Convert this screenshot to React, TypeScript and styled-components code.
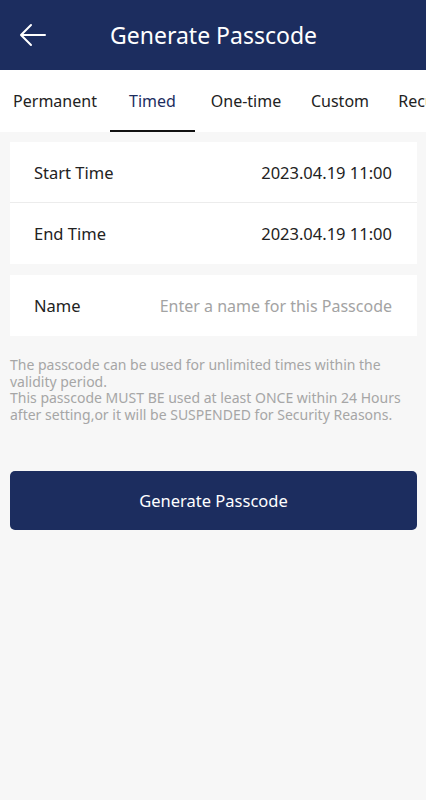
import React from "react";
import styled, { createGlobalStyle } from "styled-components";

const Global = createGlobalStyle`
  html, body { margin: 0; padding: 0; background: #f7f7f7; }
  body { font-family: "Noto Sans", Roboto, sans-serif; }
  * { box-sizing: border-box; }
`;

const Page = styled.div`
  width: 426px;
  min-height: 800px;
  background: #f7f7f7;
  overflow: hidden;
`;

const Header = styled.header`
  height: 70px;
  background: #1c2d5f;
  display: flex;
  align-items: center;
  padding-left: 18px;
`;

const BackButton = styled.button`
  width: 30px;
  height: 30px;
  border: 0;
  background: none;
  padding: 0;
  display: flex;
  align-items: center;
  justify-content: center;
`;

const Title = styled.h1`
  margin: 0 0 0 62px;
  font-size: 23px;
  font-weight: 400;
  color: #fff;
`;

const Tabs = styled.nav`
  height: 62px;
  background: #fff;
  display: flex;
  align-items: stretch;
  white-space: nowrap;
  overflow: hidden;
`;

const Tab = styled.div<{ $active?: boolean; $w: number }>`
  flex: 0 0 ${(p) => p.$w}px;
  display: flex;
  align-items: center;
  justify-content: center;
  font-size: 16px;
  color: ${(p) => (p.$active ? "#1c2d5f" : "#222")};
  position: relative;
  &::after {
    content: "";
    display: ${(p) => (p.$active ? "block" : "none")};
    position: absolute;
    left: 0;
    right: 0;
    bottom: 0;
    height: 2px;
    background: #111;
  }
`;

const Content = styled.main`
  padding: 10px 9px 0 10px;
`;

const Card = styled.section`
  background: #fff;
  margin-bottom: 11px;
`;

const Row = styled.div<{ $divider?: boolean }>`
  height: 61px;
  display: flex;
  align-items: center;
  justify-content: space-between;
  padding: 0 25px 0 24px;
  border-bottom: ${(p) => (p.$divider ? "1px solid #ececec" : "none")};
`;

const Label = styled.span`
  font-size: 16.5px;
  color: #222;
`;

const Value = styled.span<{ $placeholder?: boolean }>`
  font-size: ${(p) => (p.$placeholder ? "16px" : "16.5px")};
  color: ${(p) => (p.$placeholder ? "#a3a3a3" : "#222")};
`;

const Help = styled.p`
  margin: 21px 0 0 0;
  font-size: 14px;
  line-height: 16.7px;
  color: #a6a6a6;
`;

const PrimaryButton = styled.button`
  display: block;
  width: 407px;
  height: 59px;
  margin-top: 47px;
  border: 0;
  border-radius: 5px;
  background: #1c2d5f;
  color: #fff;
  font-family: inherit;
  font-size: 16.5px;
`;

export default function App() {
  return (
    <Page>
      <Global />
      <Header>
        <BackButton aria-label="Back">
          <svg width="28" height="24" viewBox="0 0 28 24" fill="none" stroke="#fff" strokeWidth="2" strokeLinecap="round" strokeLinejoin="round">
            <path d="M26 12H2M12 2L2 12l10 10" />
          </svg>
        </BackButton>
        <Title>Generate Passcode</Title>
      </Header>
      <Tabs>
        <Tab $w={110}>Permanent</Tab>
        <Tab $w={85} $active>Timed</Tab>
        <Tab $w={102}>One-time</Tab>
        <Tab $w={86}>Custom</Tab>
        <Tab $w={104}>Recurring</Tab>
      </Tabs>
      <Content>
        <Card>
          <Row $divider>
            <Label>Start Time</Label>
            <Value>2023.04.19 11:00</Value>
          </Row>
          <Row>
            <Label>End Time</Label>
            <Value>2023.04.19 11:00</Value>
          </Row>
        </Card>
        <Card>
          <Row>
            <Label>Name</Label>
            <Value $placeholder>Enter a name for this Passcode</Value>
          </Row>
        </Card>
        <Help>
          The passcode can be used for unlimited times within the validity period.
          <br />
          This passcode MUST BE used at least ONCE within 24 Hours after setting,or it will be SUSPENDED for Security Reasons.
        </Help>
        <PrimaryButton>Generate Passcode</PrimaryButton>
      </Content>
    </Page>
  );
}
